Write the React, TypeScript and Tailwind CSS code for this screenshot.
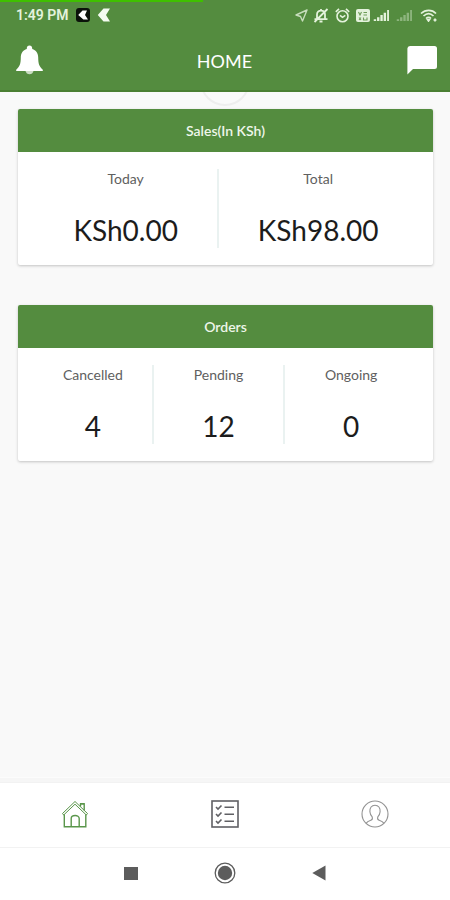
import type { ReactNode } from "react";

type Stat = {
    label: string;
    value: string;
};

const sales: Stat[] = [
    { label: "Today", value: "KSh0.00" },
    { label: "Total", value: "KSh98.00" },
];

const orders: Stat[] = [
    { label: "Cancelled", value: "4" },
    { label: "Pending", value: "12" },
    { label: "Ongoing", value: "0" },
];

function SignalBars({ className }: { className: string }) {
    return (
        <svg className={className} viewBox="0 0 18 12" fill="currentColor">
            <path d="M0 10h2.6v2H0zM3.6 8h2.6v4H3.6zM7.2 5.5h2.6V12H7.2zM10.8 3h2.6v9h-2.6zM14.6 0h2v12h-2z" />
        </svg>
    );
}

function StatusBar() {
    return (
        <div className="flex h-[30px] items-center justify-between pl-4 pr-3 text-[#e4f2dc]">
            <div className="flex items-center gap-[7px]">
                <span className="font-['Roboto',sans-serif] text-[14px] font-semibold leading-4">1:49 PM</span>
                <svg className="h-[14px] w-[14px]" viewBox="0 0 14 14">
                    <rect width="14" height="14" rx="3" fill="#0b120a" />
                    <path d="M6.5 2.5h4.500L9 7l3 4.500H7.400L2.200 7z" fill="#fff" />
                </svg>
                <svg className="h-[14px] w-[14px]" viewBox="0 0 14 14">
                    <path d="M6.500 0.500H13L9 7l4 6.500H6.500L0.800 7z" fill="#f4fbf0" />
                </svg>
            </div>
            <div className="flex items-center">
                <svg className="h-[13px] w-[13px]" viewBox="0 0 13 13" fill="none" stroke="currentColor" strokeWidth="1.4" strokeLinejoin="round" opacity="0.8">
                    <path d="M12 1 1 6l4.500 1.500L7.500 12z" />
                </svg>
                <svg className="ml-[5px] h-[15px] w-[16px]" viewBox="0 0 16 15" fill="none" stroke="currentColor" strokeWidth="1.8">
                    <path d="M4 11V6.500C4 4 5.600 2.600 8 2.600s4 1.400 4 3.900V11M1.500 11.200h13M6.500 13.500h3M8 1v1.500M1.500 14 14.500 1" />
                </svg>
                <svg className="ml-[6px] h-[15px] w-[15px]" viewBox="0 0 15 15" fill="none" stroke="currentColor" strokeWidth="1.6">
                    <circle cx="7.5" cy="8.300" r="5.500" />
                    <path d="M.8 3.800 4 .8M14.200 3.800 11 .8M5 7.300l2.500 2 2.800-2" />
                </svg>
                <svg className="ml-[6px] h-[13px] w-[14px]" viewBox="0 0 14 13">
                    <rect width="14" height="13" rx="2" fill="#e4f2dc" />
                    <path d="M2.500 3 4 6l1.500-3M7.500 3.500h3.500M7.500 6h3.500M3 8.500l2 2.500M5 8.500 3 11M7.500 8.500v2.500h3.500V8.500" fill="none" stroke="#6d9c57" strokeWidth="1.100" />
                </svg>
                <SignalBars className="ml-[3px] h-[11px] w-[18px]" />
                <SignalBars className="ml-[5px] h-[11px] w-[18px] opacity-40" />
                <svg className="ml-[6px] h-[13px] w-[18px]" viewBox="0 0 18 13" fill="none" stroke="currentColor" strokeWidth="1.700">
                    <path d="M1 4.500C5.500 0.200 12 0.200 16 4.500M3.500 7c3.200-3 7-3 10 0M6 9.500c1.600-1.500 3.600-1.500 5 0" />
                    <path d="m7.500 10.500 1 1.500 1-1.500zM13.500 11h3M15 9.500v3" />
                </svg>
            </div>
        </div>
    );
}

function Header() {
    return (
        <header className="border-b-2 border-[#4a7f33] bg-[#548c3f]">
            <div className="absolute left-0 top-0 h-[2px] w-[45%] bg-[#3fc000]" />
            <StatusBar />
            <div className="flex h-[60px] items-center justify-between pl-4 pr-3 text-white">
                <button type="button" aria-label="Notifications">
                    <svg className="h-[30px] w-[27px]" viewBox="0 0 27 30" fill="currentColor">
                        <path d="M9.500 26h8c-.5 2-2 3.300-4 3.300s-3.500-1.300-4-3.300z" opacity="0.7" />
                        <path d="M13.500 0.500c1.700 0 2.700 1.200 2.700 2.700v.8c3.800 1.200 6 4.300 6 8.500 0 6 1 9 4.600 12.200V26H.2v-1.300C3.800 21.500 4.800 18.500 4.800 12.500c0-4.200 2.200-7.300 6-8.500v-.8c0-1.500 1-2.700 2.700-2.700z" />
                    </svg>
                </button>
                <h1 className="pt-[2px] text-[18px] leading-6">HOME</h1>
                <button type="button" aria-label="Messages">
                    <svg className="h-[30px] w-[32px]" viewBox="0 0 32 30" fill="currentColor">
                        <path d="M4 1h24.500a2.500 2.500 0 0 1 2.500 2.500v18a2.500 2.500 0 0 1-2.500 2.500H7l-5.600 5.500V3.500A2.600 2.600 0 0 1 4 1z" />
                    </svg>
                </button>
            </div>
        </header>
    );
}

function StatCard({ title, columns, children }: { title: string; columns: string; children: ReactNode }) {
    return (
        <section className="relative rounded-[2px] bg-white shadow-[0_1px_3px_rgba(0,0,0,0.22)]">
            <h2 className="rounded-t-[2px] bg-[#548c3f] py-[11px] text-center text-[14px] font-semibold leading-[21px] text-[#eef6ea]">{title}</h2>
            <dl className={`grid px-4 pb-[17px] pt-[17px] text-center ${columns}`}>{children}</dl>
        </section>
    );
}

function StatItem({ label, value }: Stat) {
    return (
        <div className="flex h-[79px] flex-col justify-between border-r-2 border-[#eaf2f1] last:border-r-0">
            <dt className="text-[14px] leading-5 text-[#606060]">{label}</dt>
            <dd className="text-[28px] leading-9 text-[#1c1c1c]">{value}</dd>
        </div>
    );
}

function TabBar() {
    return (
        <nav className="grid h-[66px] grid-cols-3 border-b border-t border-[#f2f2f2] bg-white pb-[2px]">
            <a href="#home" aria-label="Home" className="flex items-center justify-center">
                <svg className="h-[28px] w-[28px]" viewBox="0 0 28 28" fill="none" stroke="#5a964b" strokeWidth="1.400">
                    <path d="M1.500 13.500 14 1.500l12.500 12M1.500 13.500l1.200 1.500L14 4.200 25.300 15l1.200-1.500" strokeWidth="1" />
                    <path d="M3.300 14.500v12.300h21.500V14.500M10.200 26.800V18.500c0-4 8-4 8 0v8.300M19.500 6.500V4h3.700v6.500M19 3.700h4.700" />
                </svg>
            </a>
            <a href="#orders" aria-label="Orders" className="flex items-center justify-center">
                <svg className="h-[28px] w-[28px]" viewBox="0 0 28 28" fill="none" stroke="#606064" strokeWidth="1.600">
                    <rect x="1" y="1" width="26" height="26" />
                    <path d="m5 7 2 2 3.500-3.500M5 14l2 2 3.500-3.500M5 21l2 2 3.500-3.500M13.500 7.300h9.500M13.500 14.300h9.500M13.500 21.300h9.500" />
                </svg>
            </a>
            <a href="#account" aria-label="Account" className="flex items-center justify-center">
                <svg className="h-[28px] w-[28px]" viewBox="0 0 28 28" fill="none" stroke="#929292" strokeWidth="1.100">
                    <circle cx="14" cy="14" r="13" />
                    <path d="M5 23.300c1-1.300 2.700-2.200 4.800-3 1.600-.6 1.900-1.900 1.400-3.500-1.500-1.500-2.200-3-2.300-5C8.500 7.800 10.700 5.200 14 5.200s5.500 2.600 5.100 6.600c-.1 2-.8 3.500-2.300 5-.5 1.600-.2 2.900 1.400 3.500 2.100.8 3.800 1.700 4.800 3" />
                </svg>
            </a>
        </nav>
    );
}

function SystemNav() {
    return (
        <div className="flex h-[52px] items-center justify-center gap-[73px] bg-white pb-[2px] text-[#5c5c5c]">
            <button type="button" aria-label="Recent apps" className="flex w-5 justify-center">
                <span className="h-[13px] w-[14px] bg-current" />
            </button>
            <button type="button" aria-label="Home screen">
                <svg className="h-[22px] w-[22px]" viewBox="0 0 22 22">
                    <circle cx="11" cy="11" r="9.800" fill="none" stroke="currentColor" strokeWidth="1.300" />
                    <circle cx="11" cy="11" r="7.200" fill="currentColor" />
                </svg>
            </button>
            <button type="button" aria-label="Back" className="flex w-5 justify-center">
                <svg className="h-4 w-[14px]" viewBox="0 0 14 16" fill="currentColor">
                    <path d="M13.500 0.500v15L.3 8z" />
                </svg>
            </button>
        </div>
    );
}

export default function App() {
    return (
        <div className="relative flex min-h-screen flex-col bg-[#f9f9f9] font-['Lato',sans-serif]">
            <Header />
            <main className="relative flex flex-1 flex-col gap-10 overflow-hidden py-[17px] pl-[18px] pr-[17px]">
                {/* pull to refresh bubble, mostly tucked under the header */}
                <div className="absolute -top-9 left-1/2 h-[50px] w-[50px] -translate-x-1/2 rounded-full border-2 border-[#eeeeee] bg-[#fafafa]" />
                <StatCard title="Sales(In KSh)" columns="grid-cols-[15fr_16fr]">
                    {sales.map((s) => <StatItem key={s.label} {...s} />)}
                </StatCard>
                <StatCard title="Orders" columns="grid-cols-[10fr_11fr_11fr]">
                    {orders.map((s) => <StatItem key={s.label} {...s} />)}
                </StatCard>
            </main>
            <div className="h-[5px] border-t border-[#fcfcfc] bg-[#f6f6f6]" />
            <TabBar />
            <SystemNav />
        </div>
    );
}
